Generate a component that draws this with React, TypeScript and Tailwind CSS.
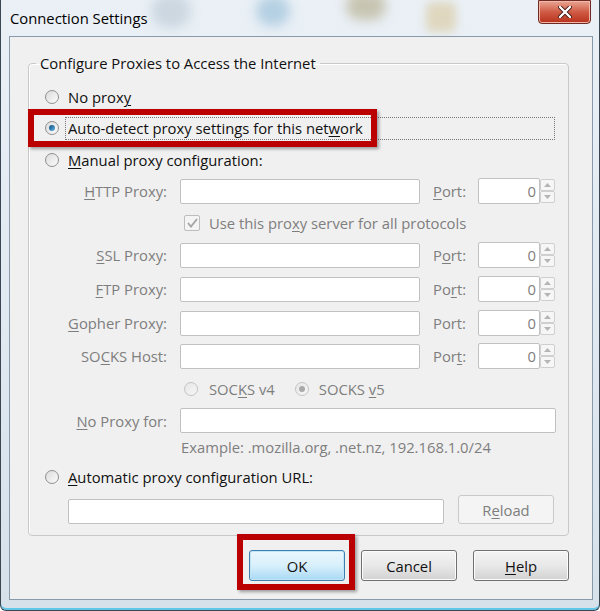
import React from "react";

const disabledText = "text-[#7e7e7e]";

function Radio({ checked, disabled }: { checked?: boolean; disabled?: boolean }) {
  return (
    <span
      className={`flex h-[14px] w-[14px] shrink-0 items-center justify-center rounded-full border ${
        disabled ? "border-[#c3c3c3] bg-gradient-to-br from-[#e6e6e6] to-[#f7f7f7]" : "border-[#8f8f8f] bg-gradient-to-br from-[#dcdcdc] to-[#fbfbfb]"
      }`}
    >
      {checked && (
        <span
          className={`h-[6px] w-[6px] rounded-full ${
            disabled ? "bg-[#a9a9a9]" : "bg-gradient-to-br from-[#0f4c7c] to-[#5fb6e8]"
          }`}
        />
      )}
    </span>
  );
}

function TextBox({ className = "" }: { className?: string }) {
  return <div className={`h-[25px] rounded-[2px] border border-[#c1c1c1] bg-white ${className}`} />;
}

function PortBox() {
  return (
    <div className="flex h-[26px]">
      <div className="flex w-[62px] items-center justify-end rounded-[2px] border border-[#c1c1c1] bg-white pr-[3px] text-[#7e7e7e]">
        0
      </div>
      <div className="flex w-[15px] flex-col py-[1px]">
        <div className="flex flex-1 items-center justify-center rounded-[2px] border border-[#cfcfcf] bg-[#f6f6f6]">
          <svg width="7" height="4" viewBox="0 0 7 4">
            <path d="M0 4 L3.5 0 L7 4 Z" fill="#b5b5b5" />
          </svg>
        </div>
        <div className="flex flex-1 items-center justify-center rounded-[2px] border border-[#cfcfcf] bg-[#f6f6f6]">
          <svg width="7" height="4" viewBox="0 0 7 4">
            <path d="M0 0 L3.5 4 L7 0 Z" fill="#b5b5b5" />
          </svg>
        </div>
      </div>
    </div>
  );
}

function ProxyRow({ label, port, className = "" }: { label: React.ReactNode; port: React.ReactNode; className?: string }) {
  return (
    <div className={`flex h-[26px] items-center ${className}`}>
      <div className={`w-[122px] text-right ${disabledText}`}>{label}</div>
      <TextBox className="ml-[13px] w-[240px]" />
      <div className={`ml-[13px] w-[45px] ${disabledText}`}>{port}</div>
      <PortBox />
    </div>
  );
}

function Btn({ children, primary }: { children: React.ReactNode; primary?: boolean }) {
  return (
    <div
      className={`flex h-[31px] w-[96px] items-center justify-center rounded-[3px] border text-[#111] ${
        primary
          ? "border-[#3c7fb1] bg-gradient-to-b from-[#eaf6fd] via-[#d9f0fc] to-[#a7d9f5] shadow-[inset_0_0_0_1px_#c4e5f6]"
          : "border-[#707070] bg-gradient-to-b from-[#f4f4f4] via-[#e8e8e8] to-[#d2d2d2] shadow-[inset_0_0_0_1px_#fcfcfc]"
      }`}
    >
      {children}
    </div>
  );
}

export default function App() {
  return (
    <div className="relative h-[611px] w-[600px] overflow-hidden rounded-b-[6px] border-x border-b border-[#3a4652] bg-gradient-to-b from-[#eaf0f6] via-[#e1e9f1] to-[#d6e1ea] font-['Open_Sans',sans-serif] text-[14.8px] leading-[20px] text-[#111] shadow-[inset_0_-2px_0_#62c6e6]">
      {/* blurred desktop showing through the glass frame */}
      <div className="pointer-events-none absolute left-[150px] top-[-6px] h-[34px] w-[40px] rounded-full bg-[#b9c7d3] opacity-60 blur-[6px]" />
      <div className="pointer-events-none absolute left-[255px] top-[-4px] h-[30px] w-[34px] rounded-full bg-[#7fb0d0] opacity-50 blur-[6px]" />
      <div className="pointer-events-none absolute left-[345px] top-[-8px] h-[28px] w-[40px] rounded-full bg-[#a59a6e] opacity-50 blur-[6px]" />
      <div className="pointer-events-none absolute left-[425px] top-[2px] h-[30px] w-[30px] rounded-[6px] bg-[#d8c79a] opacity-60 blur-[5px]" />

      {/* title bar */}
      <div className="relative flex h-[36px] items-start justify-between pl-[9px] pr-[8px]">
        <span className="mt-[8px] text-[#000]">Connection Settings</span>
        <div className="flex h-[24px] w-[53px] items-center justify-center rounded-b-[4px] border border-[#6e2a23] bg-gradient-to-b from-[#e8a493] via-[#cf5a44] to-[#b8301a] shadow-[inset_0_0_0_1px_#f1b7a9]">
          <svg width="14" height="12" viewBox="0 0 14 12">
            <path d="M2 1 L12 11 M12 1 L2 11" stroke="#3a1510" strokeWidth="4" strokeLinecap="round" />
            <path d="M2 1 L12 11 M12 1 L2 11" stroke="#fff" strokeWidth="2.4" strokeLinecap="round" />
          </svg>
        </div>
      </div>

      {/* client area */}
      <div className="relative ml-[8px] mr-[6px] h-[564px] border border-[#8799aa] bg-[#f0f0f0] pl-[18px] pr-[23px] pt-[16px]">
        <fieldset className="w-[541px] rounded-[4px] border border-[#c9c9c9] shadow-[inset_1px_1px_0_#fff]">
          <legend className="ml-[7px] px-[4px] leading-[20px]">Configure Proxies to Access the Internet</legend>
          <div className="pb-[11px] pl-[16px] pt-[13px]">
            <div className="flex h-[22px] items-center gap-[9px]">
              <Radio />
              <span>
                No prox<u className="underline-offset-2">y</u>
              </span>
            </div>

            <div className="relative mt-[9px] flex h-[22px] items-center">
              <div className="absolute left-[-17px] top-[-8px] h-[38px] w-[349px] border-[6px] border-[#bb0000] shadow-[2px_2px_3px_rgba(0,0,0,0.35)]" />
              <Radio checked />
              <span className="ml-[6px] flex h-[23px] w-[490px] items-center border border-dotted border-[#777] pl-[2px]">
                Auto-detect proxy settings for this net<u className="underline-offset-2">w</u>ork
              </span>
            </div>

            <div className="mt-[10px] flex h-[22px] items-center gap-[9px]">
              <Radio />
              <span>
                <u className="underline-offset-2">M</u>anual proxy configuration:
              </span>
            </div>

            <ProxyRow
              className="mt-[7px]"
              label={
                <>
                  <u className="underline-offset-2">H</u>TTP Proxy:
                </>
              }
              port={
                <>
                  <u className="underline-offset-2">P</u>ort:
                </>
              }
            />

            <div className={`mt-[8px] flex h-[22px] items-center pl-[139px] ${disabledText}`}>
              <span className="flex h-[16px] w-[16px] items-center justify-center rounded-[2px] border border-[#bdbdbd] bg-[#f4f4f4]">
                <svg width="11" height="10" viewBox="0 0 11 10">
                  <path d="M1 5 L4 8.5 L10 1" stroke="#a3a3a3" strokeWidth="1.8" fill="none" />
                </svg>
              </span>
              <span className="ml-[9px]">
                Use this pro<u className="underline-offset-2">x</u>y server for all protocols
              </span>
            </div>

            <ProxyRow
              className="mt-[8px]"
              label={
                <>
                  <u className="underline-offset-2">S</u>SL Proxy:
                </>
              }
              port={
                <>
                  P<u className="underline-offset-2">o</u>rt:
                </>
              }
            />
            <ProxyRow
              className="mt-[8px]"
              label={
                <>
                  <u className="underline-offset-2">F</u>TP Proxy:
                </>
              }
              port={
                <>
                  Po<u className="underline-offset-2">r</u>t:
                </>
              }
            />
            <ProxyRow
              className="mt-[8px]"
              label={
                <>
                  <u className="underline-offset-2">G</u>opher Proxy:
                </>
              }
              port="Port:"
            />
            <ProxyRow
              className="mt-[7px]"
              label={
                <>
                  SO<u className="underline-offset-2">C</u>KS Host:
                </>
              }
              port={
                <>
                  Por<u className="underline-offset-2">t</u>:
                </>
              }
            />

            <div className={`mt-[9px] flex h-[22px] items-center pl-[139px] ${disabledText}`}>
              <Radio disabled />
              <span className="ml-[11px]">
                SOC<u className="underline-offset-2">K</u>S v4
              </span>
              <span className="ml-[20px]">
                <Radio checked disabled />
              </span>
              <span className="ml-[10px]">
                SOCKS <u className="underline-offset-2">v</u>5
              </span>
            </div>

            <div className="mt-[8px] flex h-[25px] items-center">
              <div className={`w-[122px] text-right ${disabledText}`}>
                <u className="underline-offset-2">N</u>o Proxy for:
              </div>
              <TextBox className="ml-[13px] w-[376px]" />
            </div>

            <div className={`mt-[4px] h-[20px] pl-[136px] ${disabledText}`}>Example: .mozilla.org, .net.nz, 192.168.1.0/24</div>

            <div className="mt-[9px] flex h-[22px] items-center gap-[9px]">
              <Radio />
              <span>
                <u className="underline-offset-2">A</u>utomatic proxy configuration URL:
              </span>
            </div>

            <div className="mt-[7px] flex h-[29px] items-end pl-[23px]">
              <TextBox className="w-[376px]" />
              <div className={`ml-[14px] flex h-[29px] w-[96px] items-center justify-center self-start rounded-[3px] border border-[#c9c9c9] bg-[#f4f4f4] ${disabledText}`}>
                R<u className="underline-offset-2">e</u>load
              </div>
            </div>
          </div>
        </fieldset>

        <div className="mt-[14px] flex justify-end gap-[16px]">
          <div className="relative">
            <div className="absolute left-[-12px] top-[-16px] h-[56px] w-[118px] border-[6px] border-[#bb0000] shadow-[2px_2px_3px_rgba(0,0,0,0.35)]" />
            <Btn primary>OK</Btn>
          </div>
          <Btn>Cancel</Btn>
          <Btn>
            <u className="underline-offset-2">H</u>elp
          </Btn>
        </div>
      </div>
    </div>
  );
}
